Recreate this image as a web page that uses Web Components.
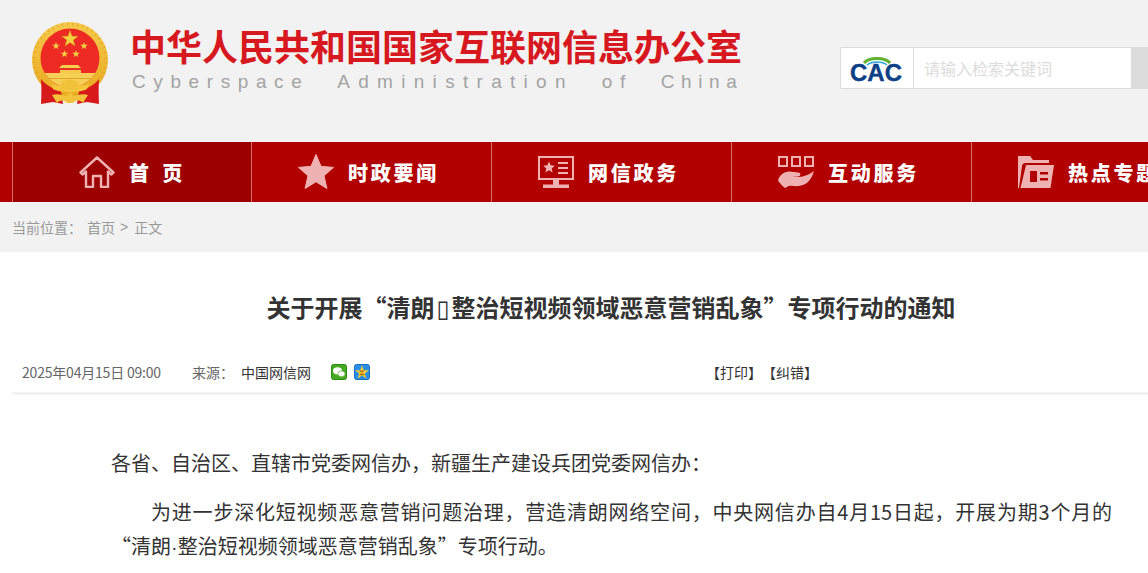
<!DOCTYPE html>
<html lang="zh-CN">
<head>
<meta charset="utf-8">
<title>关于开展“清朗·整治短视频领域恶意营销乱象”专项行动的通知</title>
<style>
  html, body {
    margin: 0;
    padding: 0;
    overflow: hidden;
    background: #fff;
    font-family: "Noto Sans CJK SC", "Liberation Sans", sans-serif;
  }
  .tofu { font-family: "DejaVu Sans", sans-serif; font-weight: 400; line-height: 1; margin: 0 2px; }
  .dot { font-family: "Liberation Sans", sans-serif; }
</style>
</head>
<body>
<site-header></site-header>

<main-nav>
  <nav-item label="首 页" active>
    <svg viewBox="0 0 36 32" width="36" height="32" fill="none" stroke="#eeb2b2" stroke-width="2.4" stroke-linejoin="round" stroke-linecap="round">
      <path d="M1.5 16.5 18 1.5l16.5 15-2 2-3.5-3V31H22V20h-8v11H7V15.5l-3.500 3z"/>
    </svg>
  </nav-item>
  <nav-item label="时政要闻">
    <svg viewBox="0 0 36 36" width="36" height="36" fill="#eeb2b2">
      <path d="M18 0.500 23 12.300 35.500 13.400 26 21.800 28.900 34.500 18 27.800 7.100 34.500 10 21.800 0.500 13.400 13 12.300z" stroke="#eeb2b2" stroke-width="1" stroke-linejoin="round"/>
    </svg>
  </nav-item>
  <nav-item label="网信政务">
    <svg viewBox="0 0 36 32" width="36" height="32" fill="#eeb2b2">
      <path fill-rule="evenodd" d="M0 0h36v24H0zM2 2v20h32V2z"/>
      <path d="M11 5.500l1.700 3.800 4.100.4-3.100 2.700.9 4-3.600-2.100-3.600 2.100.9-4-3.100-2.700 4.100-.4z"/>
      <path d="M20 6h10v2H20zM20 11h10v2H20zM20 16h10v2H20zM15 24h6v5h-6zM5 28.500h26V32H5z"/>
    </svg>
  </nav-item>
  <nav-item label="互动服务">
    <svg viewBox="0 0 36 32" width="36" height="32" fill="#eeb2b2">
      <path fill-rule="evenodd" d="M0 0h10v11H0zM2 2v7h6V2zM13 0h10v11H13zM15 2v7h6V2zM26 0h10v11H26zM28 2v7h6V2z"/>
      <path d="M0 24.500c1-5 6-9 11-9 4 0 6 1 9 1 3 0 3.500 3.500 0 4l-6 .5h7c5 0 10-2.500 15-6-2 7-6 14-15 15-4 .5-7-.5-10 0-2 .3-3 2-4 2-2-1-5-4.500-7-7.500z"/>
    </svg>
  </nav-item>
  <nav-item label="热点专题">
    <svg viewBox="0 0 36 32" width="36" height="32" fill="#eeb2b2">
      <path d="M0 0h12l3 4h16v3H7.500C5.500 7 4.500 8 4 10L1 32H0z"/>
      <path fill-rule="evenodd" d="M8 9h28l-3.500 23H2.500zM12 15v11h7V15zM22 16v2.500h8V16zM22 22v2.500h8V22z"/>
    </svg>
  </nav-item>
</main-nav>

<bread-crumb></bread-crumb>

<article-view>
  <span slot="heading">关于开展“清朗<span class="tofu">&#x25AF;</span>整治短视频领域恶意营销乱象”专项行动的通知</span>
  <p class="plain">各省、自治区、直辖市党委网信办，新疆生产建设兵团党委网信办：</p>
  <p>为进一步深化短视频恶意营销问题治理，营造清朗网络空间，中央网信办自4月15日起，开展为期3个月的“清朗<span class="dot">·</span>整治短视频领域恶意营销乱象”专项行动。</p>
</article-view>

<script>
function starPoints(cx, cy, r) {
  const pts = [];
  for (let i = 0; i < 10; i++) {
    const rad = i % 2 ? r * 0.4 : r;
    const a = -Math.PI / 2 + (i * Math.PI) / 5;
    pts.push((cx + rad * Math.cos(a)).toFixed(2) + ',' + (cy + rad * Math.sin(a)).toFixed(2));
  }
  return pts.join(' ');
}

class SiteEmblem extends HTMLElement {
  constructor() {
    super();
    this.shadowDOM = this.attachShadow({ mode: 'open' });
    this.render();
  }

  render() {
    const smallStars = [[56, 46, 4], [84, 46, 4], [64.500, 54, 4], [76, 54, 4]];
    let ticks = '';
    for (let i = 0; i < 44; i++) {
      ticks += `<line x1="70" y1="22.500" x2="70" y2="25.500" transform="rotate(${i * 8.2 - 176} 70 60)"/>`;
    }
    this.shadowDOM.innerHTML = `
      <style>
        :host { display: block; width: 80px; height: 86px; }
        svg { display: block; }
      </style>
      <svg viewBox="30 20 80 86" width="80" height="86">
        <defs>
          <linearGradient id="gold" x1="0" y1="0" x2="0" y2="1">
            <stop offset="0" stop-color="#f6c94a"/>
            <stop offset="1" stop-color="#e8a91f"/>
          </linearGradient>
          <clipPath id="disk"><circle cx="70" cy="58" r="29.500"/></clipPath>
        </defs>
        <circle cx="70" cy="60" r="38" fill="url(#gold)"/>
        <g stroke="#dd9f22" stroke-width="1" opacity=".7">${ticks}</g>
        <circle cx="70" cy="58" r="29.500" fill="#ee2a24"/>
        <polygon points="${starPoints(70, 39, 8.500)}" fill="#f8d13f" stroke="#cf9a20" stroke-width=".5"/>
        ${smallStars.map(([x, y, r]) => `<polygon points="${starPoints(x, y, r)}" fill="#f8d13f"/>`).join('')}
        <g clip-path="url(#disk)">
          <path d="M62 65h16l3 3H59z" fill="#f8cf4c"/>
          <path d="M58 68h25l-2 2v3H60v-3z" fill="#e5312a"/>
          <path d="M60 70h21v3H60z" fill="#f7c94a"/>
          <path d="M40 73h60v15H40z" fill="#f6cf57"/>
          <path d="M40 78.500h60" stroke="#d8991f" stroke-width=".8"/>
        </g>
        <path d="M41 79c5 6 12 10 20 12l2 13-10-2-12 2c.5-9 .5-17 0-25z" fill="#d7191c"/>
        <path d="M99 79c-5 6-12 10-20 12l-2 13 10-2 12 2c-.5-9-.5-17 0-25z" fill="#d7191c"/>
        <path d="M51 84c5 3 12 1 19 1s14 2 19-1l-2 5c-3 2-9 3-17 3s-14-1-17-3z" fill="#f5c63e"/>
        <path d="M62 82c2-2 5-1 8-3 3 2 6 1 8 3l2 8H60z" fill="#f3c23b"/>
        <path d="M52 95c5-2 10 0 15 1l1-3h4l1 3c5-1 10-3 15-1l-5 8c-3-3-6-3-9-1l-1 1h-6l-1-1c-3-2-6-2-9 1z" fill="#f3c23b"/>
      </svg>
    `;
  }
}
customElements.define('site-emblem', SiteEmblem);

class SearchBox extends HTMLElement {
  constructor() {
    super();
    this.shadowDOM = this.attachShadow({ mode: 'open' });
    this.shadowDOM.innerHTML = `
      <style>
        :host { display: flex; height: 42px; width: 308px; }
        * { box-sizing: border-box; }
        .box {
          display: flex;
          flex: 0 0 291px;
          background: #fff;
          border: 1px solid #dcdcdc;
          border-right: 0;
          border-radius: 2px 0 0 2px;
        }
        .mark {
          flex: 0 0 73px;
          border-right: 1px solid #dcdcdc;
          display: flex;
          align-items: center;
          justify-content: center;
        }
        .hint {
          padding-left: 10px;
          font-size: 16px;
          line-height: 41px;
          color: #dcdcdc;
        }
        .go { flex: 1; background: #dcdcdc; }
        svg { display: block; }
      </style>
      <div class="box">
        <div class="mark">
          <svg viewBox="0 0 54 28" width="54" height="28">
            <path d="M14 9C19 3 35 3 40 9" fill="none" stroke="#5fb22d" stroke-width="3"/>
            <path d="M17 11C22 7 32 7 37 11" fill="none" stroke="#2aa3dc" stroke-width="1.600"/>
            <text x="0" y="27" font-family="Liberation Sans" font-weight="700" font-size="24" fill="#0b3f86" stroke="#0b3f86" stroke-width=".4" textLength="52" lengthAdjust="spacingAndGlyphs">CAC</text>
          </svg>
        </div>
        <span class="hint">请输入检索关键词</span>
      </div>
      <div class="go"></div>
    `;
  }
}
customElements.define('search-box', SearchBox);

class SiteHeader extends HTMLElement {
  constructor() {
    super();
    this.shadowDOM = this.attachShadow({ mode: 'open' });
    this.shadowDOM.innerHTML = `
      <style>
        :host {
          display: flex;
          height: 142px;
          box-sizing: border-box;
          padding: 20px 0 0 30px;
          background: #f2f2f2;
        }
        .names { margin-left: 20px; padding-top: 2px; flex: 0 0 auto; width: 612px; }
        h1 {
          margin: 0;
          font-size: 36px;
          line-height: 46px;
          font-weight: 700;
          color: #d7181f;
          white-space: nowrap;
        }
        .en {
          margin: 3px 0 0 2px;
          font-family: "Liberation Sans", sans-serif;
          font-size: 19px;
          line-height: 22px;
          letter-spacing: 7.600px;
          word-spacing: 15px;
          color: #a3a3a3;
          white-space: nowrap;
        }
        .wide { letter-spacing: 8.300px; }
        .tight { letter-spacing: 6.600px; }
        search-box { margin: 27px 0 0 auto; }
      </style>
      <site-emblem></site-emblem>
      <div class="names">
        <h1>中华人民共和国国家互联网信息办公室</h1>
        <div class="en">Cyberspace <span class="wide">Administration</span> of <span class="tight">China</span></div>
      </div>
      <search-box></search-box>
    `;
  }
}
customElements.define('site-header', SiteHeader);

class MainNav extends HTMLElement {
  constructor() {
    super();
    this.shadowDOM = this.attachShadow({ mode: 'open' });
    this.shadowDOM.innerHTML = `
      <style>
        :host {
          display: flex;
          height: 60px;
          padding-left: 12px;
          background: #b20000;
          overflow: hidden;
        }
      </style>
      <slot></slot>
    `;
  }
}
customElements.define('main-nav', MainNav);

class NavItem extends HTMLElement {
  constructor() {
    super();
    this.shadowDOM = this.attachShadow({ mode: 'open' });
  }

  connectedCallback() {
    this.shadowDOM.innerHTML = `
      <style>
        :host {
          display: flex;
          flex: 0 0 240px;
          box-sizing: border-box;
          align-items: center;
          justify-content: center;
          gap: 14px;
          padding-right: 6px;
          border-right: 1px solid #d96a6a;
        }
        :host([active]) {
          padding-left: 4px;
          padding-right: 4px;
          background: #9c0000;
          border-left: 1px solid #d96a6a;
        }
        ::slotted(svg) { display: block; flex: none; }
        span {
          font-size: 20px;
          font-weight: 900;
          letter-spacing: 2.800px;
          word-spacing: 3px;
          color: #fff;
          white-space: nowrap;
        }
      </style>
      <slot></slot>
      <span>${this.getAttribute('label')}</span>
    `;
  }
}
customElements.define('nav-item', NavItem);

class BreadCrumb extends HTMLElement {
  constructor() {
    super();
    this.shadowDOM = this.attachShadow({ mode: 'open' });
    this.shadowDOM.innerHTML = `
      <style>
        :host {
          display: flex;
          height: 50px;
          box-sizing: border-box;
          padding: 0 0 1px 12px;
          align-items: center;
          background: #f2f2f2;
          font-size: 14px;
          color: #999;
        }
        .here { margin-right: 5px; }
        .sep { margin: 0 6px 0 5px; font-family: "Liberation Sans", sans-serif; }
      </style>
      <span class="here">当前位置：</span>
      <span>首页</span>
      <span class="sep">&gt;</span>
      <span>正文</span>
    `;
  }
}
customElements.define('bread-crumb', BreadCrumb);

class MetaBar extends HTMLElement {
  constructor() {
    super();
    this.shadowDOM = this.attachShadow({ mode: 'open' });
    this.shadowDOM.innerHTML = `
      <style>
        :host {
          display: grid;
          grid-template-columns: 694px 1fr;
          align-items: center;
          height: 41px;
          box-sizing: border-box;
          padding-bottom: 3px;
          border-bottom: 3px solid #f2f2f2;
          font-size: 14px;
          color: #666;
          white-space: nowrap;
          text-spacing-trim: space-all;
        }
        .left { display: flex; align-items: center; padding-left: 10px; }
        .date { width: 170px; letter-spacing: -.2px; }
        .from { width: 49px; }
        .src { width: 90px; color: #333; }
        svg { display: block; margin-right: 7px; }
        .tools { color: #333; }
      </style>
      <div class="left">
        <span class="date">2025年04月15日 09:00</span>
        <span class="from">来源：</span>
        <span class="src">中国网信网</span>
        <svg viewBox="0 0 16 16" width="16" height="16">
          <rect x=".5" y=".5" width="15" height="15" rx="2" fill="#46a81e" stroke="#2f8a12"/>
          <ellipse cx="6.500" cy="6.800" rx="4.500" ry="3.600" fill="#fff"/>
          <ellipse cx="10.500" cy="9.800" rx="3.600" ry="2.900" fill="#fff" stroke="#46a81e" stroke-width=".6"/>
        </svg>
        <svg viewBox="0 0 16 16" width="16" height="16">
          <rect x=".5" y=".5" width="15" height="15" rx="2" fill="#2a8fe4" stroke="#1a6fc0"/>
          <polygon points="${starPoints(8, 8.600, 7.400)}" fill="#f8cf3a"/>
          <path d="M5.500 6.500h5l-3.200 3.500h3.200v1.300h-5.300l3.300-3.500H5.500z" fill="#a86a10"/>
        </svg>
      </div>
      <div class="tools">【打印】【纠错】</div>
    `;
  }
}
customElements.define('meta-bar', MetaBar);

class ArticleView extends HTMLElement {
  constructor() {
    super();
    this.shadowDOM = this.attachShadow({ mode: 'open' });
  }

  connectedCallback() {
    this.shadowDOM.innerHTML = `
      <style>
        :host {
          display: block;
          width: 1198px;
          margin-left: 12px;
          padding-top: 38px;
        }
        h2 {
          margin: 0 0 30px;
          font-size: 24px;
          line-height: 34px;
          font-weight: 700;
          text-align: center;
          color: #333;
        }
        .body { padding: 51px 0 0 99px; width: 1001px; }
        ::slotted(p) {
          margin: 0 0 15px;
          font-size: 20px;
          line-height: 34px;
          color: #333;
          text-indent: 40px;
          text-align: justify;
        }
        ::slotted(p.plain) { text-indent: 0; }
      </style>
      <h2><slot name="heading"></slot></h2>
      <meta-bar></meta-bar>
      <div class="body"><slot></slot></div>
    `;
  }
}
customElements.define('article-view', ArticleView);
</script>
</body>
</html>
